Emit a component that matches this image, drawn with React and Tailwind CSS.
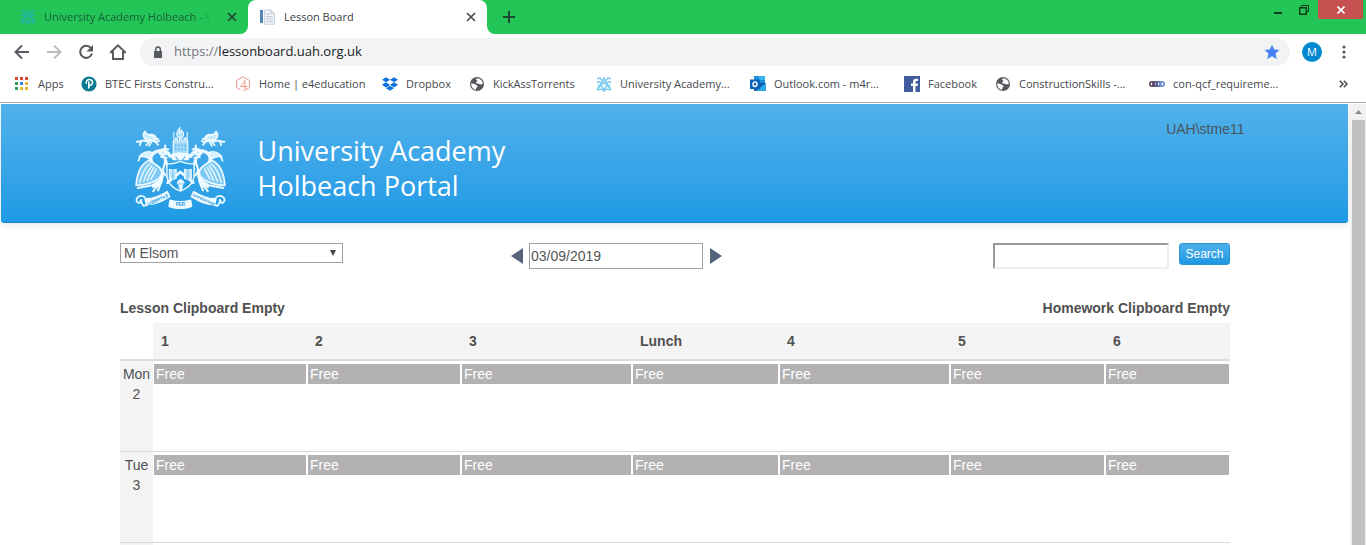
import React, { useState } from 'react';
import { FaDropbox } from 'react-icons/fa';

const periods = [
  { name: '1', width: 'w-[154px]' },
  { name: '2', width: 'w-[154px]' },
  { name: '3', width: 'w-[171px]' },
  { name: 'Lunch', width: 'w-[147px]' },
  { name: '4', width: 'w-[171px]' },
  { name: '5', width: 'w-[155px]' },
  { name: '6', width: 'w-[125px]' },
];

const days = [
  { name: 'Mon', date: 2 },
  { name: 'Tue', date: 3 },
];

// ---- Icons ----

const AppsIcon = () => (
  <svg className="size-4 shrink-0" viewBox="0 0 16 16" shapeRendering="crispEdges">
    <path fill="#d9473a" d="M1 1h3v3H1zM6 1h3v3H6zM11 1h3v3h-3z" />
    <path fill="#2f9b57" d="M1 6h3v3H1zM1 11h3v3H1z" />
    <path fill="#3b7de0" d="M6 6h3v3H6z" />
    <path fill="#e9b233" d="M11 6h3v3h-3zM6 11h3v3H6zM11 11h3v3h-3z" />
  </svg>
);

const PearsonIcon = () => (
  <svg className="size-4 shrink-0" viewBox="0 0 16 16">
    <circle cx="8" cy="8" r="7.6" fill="#0c7a92" />
    <path d="M5.2 7.2C5 4.6 6.5 3.6 8.2 3.6c2 0 3.3 1.2 3.3 2.9 0 1.9-1.5 3-3.7 2.9" fill="none" stroke="#fff" strokeWidth="1.5" strokeLinecap="round" />
    <path d="M7.8 6v6" stroke="#fff" strokeWidth="1.6" strokeLinecap="round" />
  </svg>
);

const E4Icon = () => (
  <svg className="size-4 shrink-0" viewBox="0 0 16 16" fill="none" stroke="#ee9c88" strokeWidth="1">
    <path d="M5.5 13.8 1.5 11.5V4.5L8 .8l6.500 3.700v7L8.500 15" />
    <path d="M10 13.5V4.5L5.5 10.5H12.5" />
  </svg>
);

const GlobeIcon = () => (
  <svg className="size-4 shrink-0" viewBox="0 0 16 16">
    <circle cx="8" cy="8" r="7" fill="#55585c" />
    <path d="M9 2.300c-2 .3-2.500 1.300-1.500 2 1.300.2 1.300 1 .4 1.400-1.300.5-1.100 1.600.1 1.700 1.500 0 2.300.3 3 1.100l2.900-.5C13.700 5 11.800 2.700 9 2.300z" fill="#fff" />
    <path d="M2.200 7.500c1.300 0 3.100.2 4.200 1 1 .7 2.100.8 2.200 1.700 0 .9-1.200 1-1.400 1.900-.1.700-.1 1.200-.3 1.800C4.200 13.300 2.100 10.700 2.200 7.500z" fill="#fff" />
  </svg>
);

const MiniCrest = ({ color }) => (
  <svg className="size-4 shrink-0" viewBox="0 0 16 16" fill="none" stroke={color} strokeWidth="1.6" opacity=".85">
    <path d="M1 3l3-1 1 2M15 3l-3-1-1 2M8 1v3M6 4h4v2H6zM1 7c2-2 4-1 4 1S3 11 1 13M15 7c-2-2-4-1-4 1s2 3 4 5" />
    <path d="M5.500 7.500h5v3L8 13l-2.500-2.500zM1 14l5-1 2 2 2-2 5 1M2 9l3 1M14 9l-3 1M2 11h2M14 11h-2" />
  </svg>
);

const OutlookIcon = () => (
  <svg className="size-4 shrink-0" viewBox="0 0 16 16">
    <path fill="#1a8fdc" d="M4 0h11v9H4z" />
    <path fill="#35b8f1" d="M9 0h6v4H9z" />
    <path fill="#0f5ea8" d="M4 6l12 1v8H4z" />
    <path fill="#28a8ea" d="M16 7v8H6z" />
    <path fill="#0a62b8" d="M0 3.500h10v9.500H0z" />
    <ellipse cx="5" cy="8.200" rx="2" ry="2.300" fill="none" stroke="#fff" strokeWidth="1.400" />
  </svg>
);

const FacebookIcon = () => (
  <svg className="size-4 shrink-0" viewBox="0 0 16 16">
    <path fill="#3f5b9b" d="M0 0h16v16H0z" />
    <path fill="#fff" d="M9 16V10H7V7.500h2V6c0-2.200 1.200-3.300 3.200-3.300H14V5h-1.300c-.9 0-1.200.4-1.200 1.200v1.300H14L13.600 10h-2.100v6z" />
  </svg>
);

const RingsIcon = () => (
  <svg className="size-4 shrink-0" viewBox="0 0 16 16" fill="none" strokeWidth="1.5">
    <circle cx="3" cy="8" r="2.200" stroke="#5a3550" />
    <circle cx="6" cy="8" r="2.200" stroke="#4d3f70" />
    <circle cx="9.500" cy="8" r="2.200" stroke="#44559a" />
    <circle cx="13" cy="8" r="2.200" stroke="#5b86cf" />
  </svg>
);

const DocumentIcon = () => (
  <svg className="size-4 shrink-0" viewBox="0 0 16 16">
    <path fill="#4f87b8" d="M0 1h3v13H0z" />
    <path fill="#eef1f6" stroke="#c2cad4" strokeWidth=".8" d="M4.500.800h6.500l3.500 3.500v11h-10z" />
    <path fill="none" stroke="#bac7d9" strokeWidth=".9" d="M6 5h4M6 7.500h7M6 10h7M6 12.500h7M11 1v3.500h3.500" />
  </svg>
);

const CloseIcon = () => (
  <svg className="size-[10px]" viewBox="0 0 10 10" stroke="currentColor" strokeWidth="1.700">
    <path d="M1 1l8 8M9 1L1 9" />
  </svg>
);

// School coat of arms
const Crest = () => (
  <svg className="h-[82px] w-[91px] shrink-0" viewBox="49 53 265 239" fill="none" stroke="#eefaff" strokeWidth="4" strokeLinecap="round" strokeLinejoin="round">
    {/* tower and flame */}
    <path d="M180 54c-10 12-12 20-7 28h15c5-9 2-15-4-20 0 7-2 9-5 11 1-7 0-12 1-19z" fill="#9ddcfa" strokeWidth="3" />
    <path d="M160 132V94h6v-9h6v9h6v-9h8v9h6v-9h6v9h5v38z" fill="#a8defa" strokeWidth="3" />
    <path d="M168 104v22M177 104v22M186 104v22M195 104v22" stroke="#48aeea" strokeWidth="3" strokeDasharray="6 5" />
    <path d="M162 92V68M201 92V68" strokeWidth="3" />
    <path d="M154 135c9-8 46-8 55 0l-6 13h-43z" fill="#eefaff" />
    <path d="M159 152l22 15 22-15M168 140l13 19 13-19" stroke="#4bb1ec" strokeWidth="3" />
    {/* left supporter, the right one is its mirror image */}
    {[false, true].map((flip) => (
      <g key={flip ? 'right' : 'left'} transform={flip ? 'translate(363 0) scale(-1 1)' : undefined}>
        <path d="M54 96c12 2 16-6 22-3 8 3 15 2 21-3 7 6 14 8 22 4" strokeWidth="6" />
        <path d="M82 91c-9-7-12-17-4-25 1 8 6 9 11 9 9 0 14 5 19 11l9 2-14 4c-6-2-12-1-21-1z" fill="#c5eafc" strokeWidth="5" />
        <path d="M92 76c8-2 15 1 18 8M66 97l-3 9M98 95l-8 13M108 96l8 9M90 97l-8 9" strokeWidth="5" />
        <path d="M137 107v27M128 118h18M120 126l12 7M125 140l16 3" strokeWidth="6" />
        <path d="M151 138c-7-16-27-20-43-12-14 7-17 20-9 32 8 13 26 15 29 30 3 17-9 28-25 38" strokeWidth="10" />
        <path d="M99 127c-15-6-31 1-38 13 12-3 20-1 30 6z" fill="#d4f0fd" strokeWidth="4" />
        <path d="M64 139l-5 12" strokeWidth="5" />
        <path d="M90 150c-21 10-35 33-38 73 24-1 47-7 63-17 14-10 15-24 6-34-8-9-20-13-31-22z" fill="#7dcaf5" strokeWidth="5" />
        <path d="M92 160c-14 12-24 32-29 54M98 166c-11 14-19 29-24 45M104 171c-9 14-15 27-19 38M111 175c-6 12-11 22-16 31" strokeWidth="4" />
        <path d="M57 231l42-8 16-11M128 208l-12 30M120 218l-18 22" strokeWidth="6" />
        <path d="M120 130c15 8 20 20 14 34-4 12-6 18 4 30M140 150l6 42" strokeWidth="6" />
      </g>
    ))}
    {/* shield with the open books */}
    <path d="M142 160c12 2 27-2 39-7 12 5 28 9 40 7v32c0 24-18 39-40 48-22-9-39-24-39-48z" fill="#2ba0e8" />
    <path d="M144 215l37-31 38 31" strokeWidth="8" />
    <path d="M149 176l10 3 10-3v27l-10 3-10-3zM193 176l10 3 10-3v27l-10 3-10-3z" fill="#b9e6fc" strokeWidth="3" />
    <path d="M159 180v26M203 180v26" stroke="#42a9eb" strokeWidth="2" />
    <path d="M172 218c1-16 19-16 20 0zM177 221h11l-3 17h-5z" fill="#eefaff" strokeWidth="2" />
    {/* motto ribbons */}
    <path d="M78 262c25 1 44-8 65-21l7 15c-22 14-42 24-68 23zM285 262c-25 1-44-8-65-21l-7 15c22 14 42 24 68 23z" fill="#eefaff" strokeWidth="4" />
    <path d="M78 258c-13-10-28 0-24 12 4 8 15 4 13-5M285 258c13-10 28 0 24 12-4 8-15 4-13-5M64 268l10 15 14-4M299 268l-10 15-14-4" strokeWidth="5" />
    <path d="M151 266c19 6 41 6 60 0l3 18c-21 8-45 8-66 0z" fill="#eefaff" strokeWidth="4" />
    <g fill="#249ae5" stroke="none" fontFamily="Liberation Sans, sans-serif" fontSize="13" fontWeight="700" textAnchor="middle">
      <text transform="translate(117 269) rotate(-24)">LIBERTAS</text>
      <text transform="translate(247 268) rotate(24)" fontSize="11">SAPIENTIAM</text>
      <text x="181" y="284">PER</text>
    </g>
  </svg>
);

const bookmarks = [
  { title: 'Apps', icon: <AppsIcon />, width: 'w-[67px]' },
  { title: 'BTEC Firsts Constru...', icon: <PearsonIcon />, width: 'w-[154px]' },
  { title: 'Home | e4education', icon: <E4Icon />, width: 'w-[147px]' },
  { title: 'Dropbox', icon: <FaDropbox className="size-4 shrink-0 text-[#0d70e0]" />, width: 'w-[87px]' },
  { title: 'KickAssTorrents', icon: <GlobeIcon />, width: 'w-[127px]' },
  { title: 'University Academy...', icon: <MiniCrest color="#6cc4ee" />, width: 'w-[154px]' },
  { title: 'Outlook.com - m4r...', icon: <OutlookIcon />, width: 'w-[154px]' },
  { title: 'Facebook', icon: <FacebookIcon />, width: 'w-[91px]' },
  { title: 'ConstructionSkills -...', icon: <GlobeIcon />, width: 'w-[154px]' },
  { title: 'con-qcf_requireme...', icon: <RingsIcon />, width: 'w-[154px]' },
];

// ---- Browser window ----

const TabStrip = () => (
  <div className="flex h-[34px] shrink-0 items-stretch bg-[#23c557] text-[11px]">
    <div className="flex w-[248px] items-center justify-between pr-[11px] pl-5 text-[#17603a]">
      <div className="flex items-center gap-2">
        <MiniCrest color="#22b5a5" />
        <span className="mask-r-from-90% whitespace-nowrap">University Academy Holbeach - V</span>
      </div>
      <button aria-label="Close tab" className="text-[#204c31]"><CloseIcon /></button>
    </div>
    <div className="relative flex w-[239px] items-center rounded-t-lg bg-white pr-[11px] pl-3 text-[#3c4043]">
      <svg className="absolute bottom-0 -left-2 size-2" viewBox="0 0 8 8"><path fill="#fff" d="M8 0v8H0a8 8 0 0 0 8-8z" /></svg>
      <svg className="absolute -right-2 bottom-0 size-2" viewBox="0 0 8 8"><path fill="#fff" d="M0 0v8h8a8 8 0 0 1-8-8z" /></svg>
      <DocumentIcon />
      <span className="ml-2 flex-1">Lesson Board</span>
      <button aria-label="Close tab" className="text-[#4a4d51]"><CloseIcon /></button>
    </div>
    <button aria-label="New tab" className="ml-4 text-[#1d4a2d]">
      <svg className="size-3" viewBox="0 0 12 12" stroke="currentColor" strokeWidth="2"><path d="M6 0v12M0 6h12" /></svg>
    </button>
    <div className="ml-auto flex items-start pr-[3px] text-[#0d3b1c]">
      <button aria-label="Minimise" className="flex h-[19px] w-[26px] items-center justify-center">
        <svg className="size-[10px]" viewBox="0 0 10 10"><path fill="currentColor" d="M1 7h8v2H1z" /></svg>
      </button>
      <button aria-label="Restore" className="flex h-[19px] w-[26px] items-center justify-center">
        <svg className="size-[10px]" viewBox="0 0 10 10" fill="none" stroke="currentColor"><path d="M2.500 2V.500h7v6H8" /><path strokeWidth="1.400" d="M.700 2.700h6.600v6.600H.700z" /></svg>
      </button>
      <button aria-label="Close" className="ml-px flex h-[19px] w-[45px] items-center justify-center bg-[#c75050] text-white">
        <svg className="size-2" viewBox="0 0 8 8" stroke="currentColor" strokeWidth="1.700"><path d="M.500.500l7 7M7.500.500l-7 7" /></svg>
      </button>
    </div>
  </div>
);

const AddressBar = () => (
  <div className="flex h-9 shrink-0 items-center bg-white pl-[14px] text-[#55585c]">
    <div className="flex w-[126px] items-center gap-4">
      <button aria-label="Back">
        <svg className="size-4" viewBox="0 0 16 16" fill="none" stroke="currentColor" strokeWidth="1.900"><path d="M15 8H2M8 1.500L1.500 8 8 14.500" /></svg>
      </button>
      <button aria-label="Forward" className="text-[#b9bbbd]">
        <svg className="size-4" viewBox="0 0 16 16" fill="none" stroke="currentColor" strokeWidth="1.900"><path d="M1 8h13M8 1.500L14.500 8 8 14.500" /></svg>
      </button>
      <button aria-label="Reload">
        <svg className="size-4" viewBox="0 0 16 16"><path fill="none" stroke="currentColor" strokeWidth="2" d="M13 4.200A6 6 0 1 0 14 9.500" /><path fill="currentColor" d="M15 1v6.500H8.500z" /></svg>
      </button>
      <button aria-label="Home">
        <svg className="size-4" viewBox="0 0 16 16" fill="none" stroke="currentColor" strokeWidth="1.900"><path d="M.800 8.300L8 1.400l7.200 6.900H13V15H3V8.300z" /></svg>
      </button>
    </div>
    <div className="flex h-7 flex-1 items-center rounded-full bg-[#f1f3f4] pr-[10px] pl-[13px]">
      <svg className="h-3 w-[10px] shrink-0" viewBox="0 0 10 12"><path fill="currentColor" d="M1 5h8v7H1z" /><path fill="none" stroke="currentColor" strokeWidth="1.400" d="M2.700 6V3.300a2.300 2.300 0 0 1 4.600 0V6" /></svg>
      <span className="ml-[11px] flex-1 text-[13px] text-[#202124]">
        <span className="text-[#74777b]">https://</span>lessonboard.uah.org.uk
      </span>
      <svg className="size-4" viewBox="0 0 16 16"><path fill="#4380f2" d="M8 .500l2.200 5 5.300.500-4 3.600 1.200 5.400L8 12.200 3.300 15l1.200-5.400L.500 6l5.300-.5z" /></svg>
    </div>
    <button aria-label="Profile" className="ml-3 size-5 rounded-full bg-[#0288d1] text-[11px] leading-5 text-white">M</button>
    <button aria-label="Menu" className="ml-[14px] w-[30px] pl-[6px]">
      <svg className="h-4 w-1" viewBox="0 0 4 16" fill="currentColor"><circle cx="2" cy="3" r="1.600" /><circle cx="2" cy="8" r="1.600" /><circle cx="2" cy="13" r="1.600" /></svg>
    </button>
  </div>
);

const BookmarksBar = () => (
  <nav className="flex h-[33px] shrink-0 items-center border-b border-[#a9b0b0] bg-white pr-[18px] pb-1 pl-[14px] text-[11px] text-[#45484c]">
    {bookmarks.map((b) => (
      <a key={b.title} href="#" className={`flex shrink-0 items-center gap-2 whitespace-nowrap ${b.width}`}>
        {b.icon}
        {b.title}
      </a>
    ))}
    <button aria-label="More bookmarks" className="ml-auto">
      <svg className="h-2 w-[9px]" viewBox="0 0 9 8" fill="none" stroke="#44474b" strokeWidth="1.500"><path d="M.800.800L4 4 .800 7.200M4.800.800L8 4 4.800 7.200" /></svg>
    </button>
  </nav>
);

// ---- Portal page ----

const PortalHeader = () => (
  <header className="mr-[2px] ml-px rounded-b-[3px] border-b border-[#1b87cc] bg-linear-to-b from-[#50b1ea] to-[#1d9ae6] shadow-[0_1px_8px_rgba(0,0,0,0.12)]">
    <div className="mx-auto flex h-[118px] w-full max-w-[1140px] items-start">
      <div className="flex pt-[23px] pl-[30px]">
        <Crest />
        <h1 className="ml-8 pt-[6px] font-['Open_Sans',sans-serif] text-[27px] leading-[35px] text-white">
          University Academy<br />Holbeach Portal
        </h1>
      </div>
      <span className="ml-auto pt-[15px] leading-5 text-[#4b545c]">UAH\stme11</span>
    </div>
  </header>
);

const Toolbar = () => {
  const [date, setDate] = useState('03/09/2019');
  const [query, setQuery] = useState('');

  return (
    <div className="grid grid-cols-3 items-start">
      <div className="relative w-[223px]">
        <select aria-label="Teacher" className="block h-5 w-full appearance-none border border-[#a0a0a0] bg-white pl-[3px] leading-[18px] text-[#555]">
          <option>M Elsom</option>
        </select>
        <svg className="pointer-events-none absolute top-[7px] right-[7px] size-[6px]" viewBox="0 0 7 7"><path fill="#444" d="M0 0h7L3.500 7z" /></svg>
      </div>
      <div className="flex items-center pl-[21px]">
        <button aria-label="Previous day">
          <svg className="h-4 w-3" viewBox="0 0 12 16"><path fill="#55647a" d="M12 0v16L0 8z" /></svg>
        </button>
        <input aria-label="Date" value={date} onChange={(e) => setDate(e.target.value)} className="mr-[7px] ml-[6px] h-[26px] w-[174px] border border-[#a0a0a0] pl-px text-[#555]" />
        <button aria-label="Next day">
          <svg className="h-4 w-3" viewBox="0 0 12 16"><path fill="#55647a" d="M0 0v16l12-8z" /></svg>
        </button>
      </div>
      <div className="flex items-start justify-end gap-[10px]">
        <input aria-label="Search text" value={query} onChange={(e) => setQuery(e.target.value)} className="h-[26px] w-[176px] border-2 border-t-[#999] border-r-[#eee] border-b-[#eee] border-l-[#999] px-1" />
        <button className="h-[22px] w-[51px] rounded-[3px] border border-[#2a94d6] bg-linear-to-b from-[#4bb0ea] to-[#1d97e3] text-[12px] leading-5 text-white">Search</button>
      </div>
    </div>
  );
};

const Timetable = () => (
  <table className="w-full table-fixed border-collapse">
    <colgroup>
      <col className="w-[33px]" />
      {periods.map((p) => (
        <col key={p.name} className={p.width} />
      ))}
    </colgroup>
    <thead>
      <tr className="h-[37px] border-b-2 border-[#dcdcdc]">
        <td />
        {periods.map((p) => (
          <th key={p.name} scope="col" className="bg-[#f4f4f4] p-0 pl-2 text-left font-bold">{p.name}</th>
        ))}
      </tr>
    </thead>
    <tbody>
      {days.map((day) => (
        <tr key={day.name} className="h-[91px] border-b border-[#d8d8dc] align-top">
          <th scope="row" className="bg-[#f4f4f4] px-0 pt-[3px] text-center leading-5 font-normal">
            {day.name}<br />{day.date}
          </th>
          {periods.map((p) => (
            <td key={p.name} className="px-px pt-[3px]">
              <div className="bg-[#b3b1b1] pl-[2px] leading-5 text-white">Free</div>
            </td>
          ))}
        </tr>
      ))}
    </tbody>
    <tfoot>
      <tr className="h-2">
        <td className="bg-[#f4f4f4]" />
      </tr>
    </tfoot>
  </table>
);

const ScrollBar = () => (
  <div className="flex w-4 shrink-0 flex-col items-center bg-[#f1f1f1]">
    <svg className="my-[6px] h-1 w-[7px] shrink-0" viewBox="0 0 7 4"><path fill="#8a8a8a" d="M0 4h7L3.500 0z" /></svg>
    <div className="w-[13px] flex-1 bg-[#c1c1c1]" />
  </div>
);

const App = () => {
  return (
    <div className="flex h-screen flex-col overflow-hidden bg-white font-['Open_Sans',sans-serif]">
      <TabStrip />
      <AddressBar />
      <BookmarksBar />
      <div className="flex min-h-0 flex-1 pt-px font-['Liberation_Sans',Arial,sans-serif] text-[14px] text-[#505050]">
        <div className="min-w-0 flex-1 overflow-hidden">
          <PortalHeader />
          <main className="mx-auto w-full max-w-[1110px] pt-5">
            <Toolbar />
            <div className="mt-7 flex justify-between pb-1 leading-[22px] font-bold">
              <h2>Lesson Clipboard Empty</h2>
              <h2>Homework Clipboard Empty</h2>
            </div>
            <Timetable />
          </main>
        </div>
        <ScrollBar />
      </div>
    </div>
  );
};

export default App;
